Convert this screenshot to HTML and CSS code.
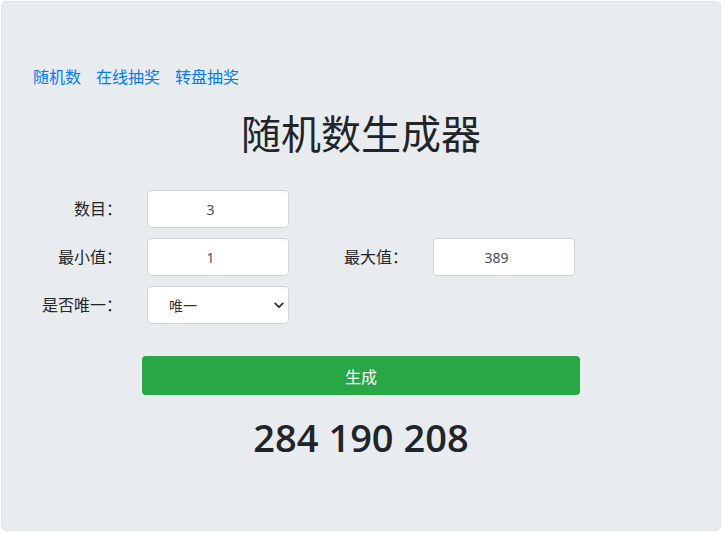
FILE: index.html
```html
<!DOCTYPE html>
<html lang="zh-CN">
<head>
<meta charset="utf-8">
<title>随机数生成器</title>
<link rel="stylesheet" href="styles.css">
</head>
<body>
<div class="card">
  <nav class="nav">
    <a href="#">随机数</a>
    <a href="#">在线抽奖</a>
    <a href="#">转盘抽奖</a>
  </nav>
  <h1 class="title">随机数生成器</h1>
  <div class="form">
    <label class="lbl">数目：</label>
    <input class="field" type="text" value="3">
    <span></span><span></span>
    <label class="lbl">最小值：</label>
    <input class="field" type="text" value="1">
    <label class="lbl">最大值：</label>
    <input class="field" type="text" value="389">
    <label class="lbl">是否唯一：</label>
    <div class="select-wrap">
      <select class="select">
        <option>唯一</option>
        <option>不唯一</option>
      </select>
      <svg class="chev" width="10" height="7" viewBox="0 0 10 7"><path d="M1.2 1.4 L5 5.2 L8.8 1.4" fill="none" stroke="#333" stroke-width="1.8" stroke-linecap="round" stroke-linejoin="round"/></svg>
    </div>
  </div>
  <div class="actions">
    <button class="btn" type="button">生成</button>
  </div>
  <div class="result">284 190 208</div>
</div>
</body>
</html>
```

FILE: styles.css
```css
html, body {
  margin: 0;
  padding: 0;
  background: #ffffff;
}
body {
  padding: 1px;
  font-family: "Noto Sans", "Noto Sans CJK SC", sans-serif;
  color: #212529;
}
.card {
  box-sizing: border-box;
  width: 720px;
  height: 530px;
  background: #e9ecef;
  border-radius: 5px;
  border: 1px solid #e2e6ea;
  padding: 63px 31px 0 31px;
}
.nav {
  display: flex;
  gap: 15px;
  font-size: 16px;
  line-height: 24px;
}
.nav a {
  color: #007bff;
  text-decoration: none;
}
.title {
  margin: 21px 0 0 0;
  text-align: center;
  font-size: 40px;
  line-height: 48px;
  font-weight: 400;
  color: #212529;
}
.form {
  margin-top: 32px;
  display: grid;
  grid-template-columns: 89px 142px 94px 142px;
  column-gap: 25px;
  row-gap: 10px;
  align-items: center;
}
.lbl {
  text-align: right;
  font-size: 16px;
  line-height: 24px;
  color: #212529;
  white-space: nowrap;
}
.field {
  box-sizing: border-box;
  width: 142px;
  height: 38px;
  border: 1px solid #ced4da;
  border-radius: 4px;
  background: #fff;
  padding: 0 27px 0 12px;
  text-align: center;
  font-family: "Noto Sans", "Noto Sans CJK SC", sans-serif;
  font-size: 14px;
  color: #495057;
  outline: none;
}
.select-wrap {
  position: relative;
  width: 142px;
  height: 38px;
}
.select {
  box-sizing: border-box;
  width: 142px;
  height: 38px;
  appearance: none;
  -webkit-appearance: none;
  border: 1px solid #ced4da;
  border-radius: 4px;
  background: #fff;
  padding: 0 24px 0 21px;
  font-family: "Noto Sans", "Noto Sans CJK SC", sans-serif;
  font-size: 14px;
  color: #333;
  outline: none;
}
.chev {
  position: absolute;
  right: 5px;
  top: 16px;
  pointer-events: none;
}
.actions {
  margin-top: 32px;
  display: flex;
  justify-content: center;
}
.btn {
  width: 438px;
  height: 39px;
  border: none;
  border-radius: 4px;
  background: #28a745;
  color: #fff;
  font-family: "Noto Sans", "Noto Sans CJK SC", sans-serif;
  font-size: 16px;
  cursor: pointer;
}
.result {
  margin-top: 18px;
  text-align: center;
  font-family: "Open Sans", "Noto Sans", sans-serif;
  font-size: 38px;
  font-weight: 600;
  line-height: 48px;
  color: #212529;
}
```
